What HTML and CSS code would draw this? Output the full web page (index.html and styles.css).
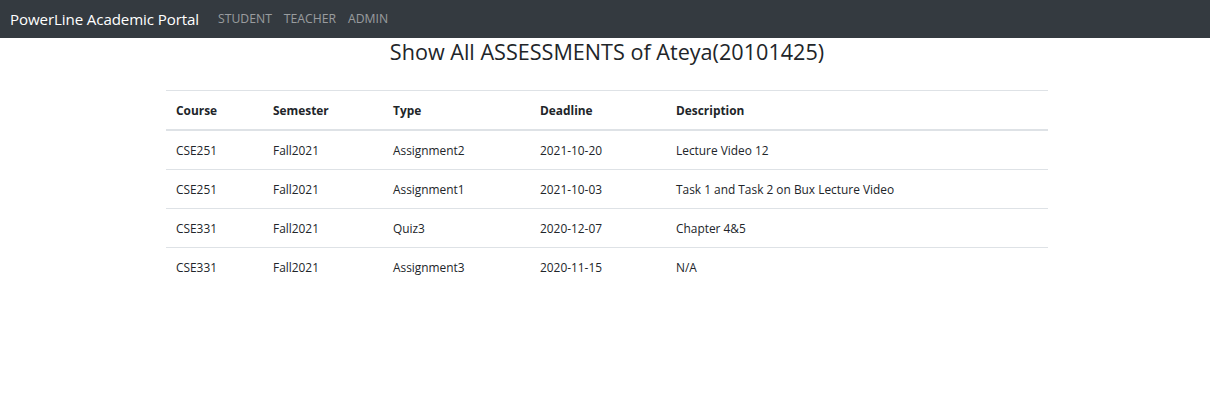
FILE: index.html
```html
<!DOCTYPE html>
<html lang="en">
<head>
<meta charset="utf-8">
<title>PowerLine Academic Portal</title>
<link rel="stylesheet" href="styles.css">
</head>
<body>
<nav class="navbar">
  <a class="brand" href="#">PowerLine Academic Portal</a>
  <ul class="nav-links">
    <li><a href="#">STUDENT</a></li>
    <li><a href="#">TEACHER</a></li>
    <li><a href="#">ADMIN</a></li>
  </ul>
</nav>
<main class="container">
  <h3 class="title">Show All ASSESSMENTS of Ateya(20101425)</h3>
  <table class="table">
    <thead>
      <tr>
        <th class="c-course">Course</th>
        <th class="c-sem">Semester</th>
        <th class="c-type">Type</th>
        <th class="c-dead">Deadline</th>
        <th>Description</th>
      </tr>
    </thead>
    <tbody>
      <tr><td>CSE251</td><td>Fall2021</td><td>Assignment2</td><td>2021-10-20</td><td>Lecture Video 12</td></tr>
      <tr><td>CSE251</td><td>Fall2021</td><td>Assignment1</td><td>2021-10-03</td><td>Task 1 and Task 2 on Bux Lecture Video</td></tr>
      <tr><td>CSE331</td><td>Fall2021</td><td>Quiz3</td><td>2020-12-07</td><td>Chapter 4&amp;5</td></tr>
      <tr><td>CSE331</td><td>Fall2021</td><td>Assignment3</td><td>2020-11-15</td><td>N/A</td></tr>
    </tbody>
  </table>
</main>
</body>
</html>
```

FILE: styles.css
```css
* { box-sizing: border-box; }
html, body { margin: 0; padding: 0; }
body {
  font-family: "Open Sans", "Noto Sans", sans-serif;
  font-size: 11.9px;
  line-height: 1.5;
  color: #212529;
  background: #fff;
}
.navbar {
  display: flex;
  align-items: center;
  height: 38px;
  padding: 0 10px;
  background: #343a40;
}
.brand {
  color: #fff;
  text-decoration: none;
  font-size: 15.1px;
  margin-right: 19px;
  letter-spacing: -0.1px;
}
.nav-links {
  display: flex;
  list-style: none;
  margin: 0;
  padding: 0;
  gap: 12px;
}
.nav-links a {
  color: rgba(255,255,255,.5);
  text-decoration: none;
  font-size: 12.2px;
}
.container {
  width: 886px;
  padding-left: 4px;
  margin: 0 auto;
}
.title {
  text-align: center;
  font-size: 21.6px;
  font-weight: 500;
  line-height: 1.2;
  margin: 1px 0 25px;
}
.table {
  width: 100%;
  border-collapse: collapse;
}
.table th, .table td {
  text-align: left;
  padding: 10px 10px;
  line-height: 18px;
  border-top: 1px solid #dee2e6;
  vertical-align: top;
}
.table thead th {
  padding-top: 10.5px;
  border-bottom: 2px solid #dee2e6;
  font-weight: 700;
}
.c-course { width: 97px; }
.c-sem { width: 120px; }
.c-type { width: 147px; }
.c-dead { width: 136px; }
```
